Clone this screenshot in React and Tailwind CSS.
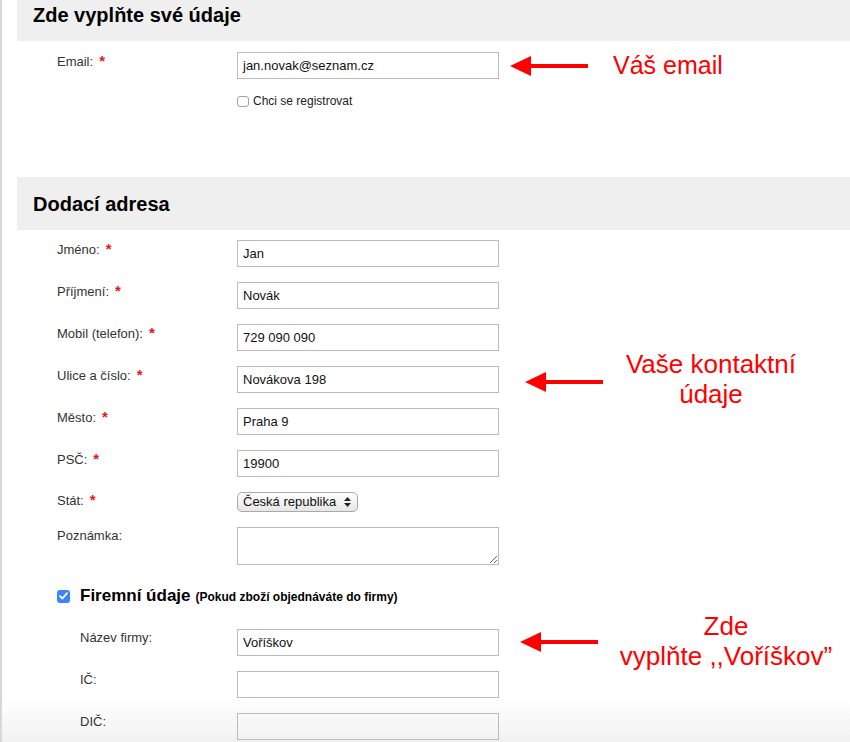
import React from 'react';

const Star = () => <span className="ml-[6px] text-[15px] font-bold leading-none text-[#e8131b]">*</span>;

const Field = ({ label, value, required, indent, faded }) => (
  <div className="flex h-[27px]">
    <div className={`${indent ? 'pl-[78px] w-[235px]' : 'pl-[55px] w-[235px]'} pt-[1px] text-[13px] leading-[16px] text-[#333]`}>
      {label}
      {required && <Star />}
    </div>
    <div className={`w-[262px] h-[27px] border border-[#bcbcbc] ${faded ? 'bg-transparent' : 'bg-white'} pl-[5px] flex items-center text-[13px] text-[#111]`}>
      {value}
    </div>
  </div>
);

const Arrow = ({ className }) => (
  <svg className={className} width="80" height="22" viewBox="0 0 80 22">
    <polygon points="0,11 21,1 21,21" fill="#ff0000" />
    <rect x="20" y="9" width="58" height="4" fill="#ff0000" />
  </svg>
);

export default function App() {
  return (
    <div className="relative w-[850px] h-[742px] overflow-hidden bg-[linear-gradient(to_bottom,#ffffff_0px,#ffffff_698px,#f1f1f1_742px)] border-l-2 border-[#d5d8dc] font-['Liberation_Sans',Arial,sans-serif]">
      {/* section 1 */}
      <div className="ml-[15px] h-[41px] bg-[#efefef] pl-[16px] text-[20px] font-bold leading-[30px] text-black">
        Zde vyplňte své údaje
      </div>
      <div className="mt-[11px]">
        <Field label="Email:" value="jan.novak@seznam.cz" required />
      </div>
      <div className="mt-[15px] h-[14px] flex items-center pl-[235px]">
        <span className="w-[12px] h-[11px] rounded-[3px] border border-[#a3a3a3] bg-white" />
        <span className="ml-[4px] text-[12px] text-[#222]">Chci se registrovat</span>
      </div>

      {/* section 2 */}
      <div className="mt-[69px] ml-[15px] h-[53px] bg-[#efefef] pl-[16px] flex items-center text-[20px] font-bold text-black">
        Dodací adresa
      </div>
      <div className="mt-[10px] flex flex-col gap-[15px]">
        <Field label="Jméno:" value="Jan" required />
        <Field label="Příjmení:" value="Novák" required />
        <Field label="Mobil (telefon):" value="729 090 090" required />
        <Field label="Ulice a číslo:" value="Novákova 198" required />
        <Field label="Město:" value="Praha 9" required />
        <Field label="PSČ:" value="19900" required />
        <div className="flex h-[20px]">
          <div className="pl-[55px] w-[235px] text-[13px] leading-[16px] text-[#333]">
            Stát:
            <Star />
          </div>
          <div className="w-[121px] h-[20px] rounded-[5px] border border-[#a9a9a9] bg-gradient-to-b from-white to-[#e6e6e6] pl-[5px] pr-[6px] flex items-center justify-between text-[13px] text-[#111]">
            <span>Česká republika</span>
            <svg width="7" height="10" viewBox="0 0 7 10">
              <polygon points="3.5,0 7,4 0,4" fill="#222" />
              <polygon points="0,6 7,6 3.5,10" fill="#222" />
            </svg>
          </div>
        </div>
        <div className="flex h-[38px]">
          <div className="pl-[55px] w-[235px] pt-[1px] text-[13px] leading-[16px] text-[#333]">Poznámka:</div>
          <textarea className="w-[262px] h-[38px] border border-[#bcbcbc] bg-white outline-none" />
        </div>
      </div>

      <div className="mt-[21px] h-[20px] flex items-center pl-[55px]">
        <span className="w-[13px] h-[13px] rounded-[3px] bg-[#3a86f4] flex items-center justify-center">
          <svg width="9" height="8" viewBox="0 0 9 8">
            <path d="M1 4.2 L3.4 6.5 L8 1.2" stroke="white" strokeWidth="1.8" fill="none" strokeLinecap="round" strokeLinejoin="round" />
          </svg>
        </span>
        <span className="ml-[10px] text-[17px] font-bold text-black">Firemní údaje</span>
        <span className="ml-[5px] mt-[2px] text-[12px] font-bold text-black">(Pokud zboží objednáváte do firmy)</span>
      </div>
      <div className="mt-[23px] flex flex-col gap-[15px]">
        <Field label="Název firmy:" value="Voříškov" indent />
        <Field label="IČ:" value="" indent />
        <Field label="DIČ:" value="" indent faded />
      </div>

      {/* annotations */}
      <Arrow className="absolute left-[508px] top-[55px]" />
      <div className="absolute left-[611px] top-[50px] text-[25px] leading-[30px] text-[#ff0000] whitespace-nowrap">
        Váš email
      </div>

      <Arrow className="absolute left-[523px] top-[371px]" />
      <div className="absolute left-[609px] top-[349px] w-[200px] text-center text-[26px] leading-[30px] text-[#ff0000] whitespace-nowrap">
        Vaše kontaktní
        <br />
        údaje
      </div>

      <Arrow className="absolute left-[518px] top-[631px]" />
      <div className="absolute left-[604px] top-[611px] w-[240px] text-center text-[26px] leading-[30px] text-[#ff0000] whitespace-nowrap">
        Zde
        <br />
        vyplňte ,,Voříškov”
      </div>
    </div>
  );
}
